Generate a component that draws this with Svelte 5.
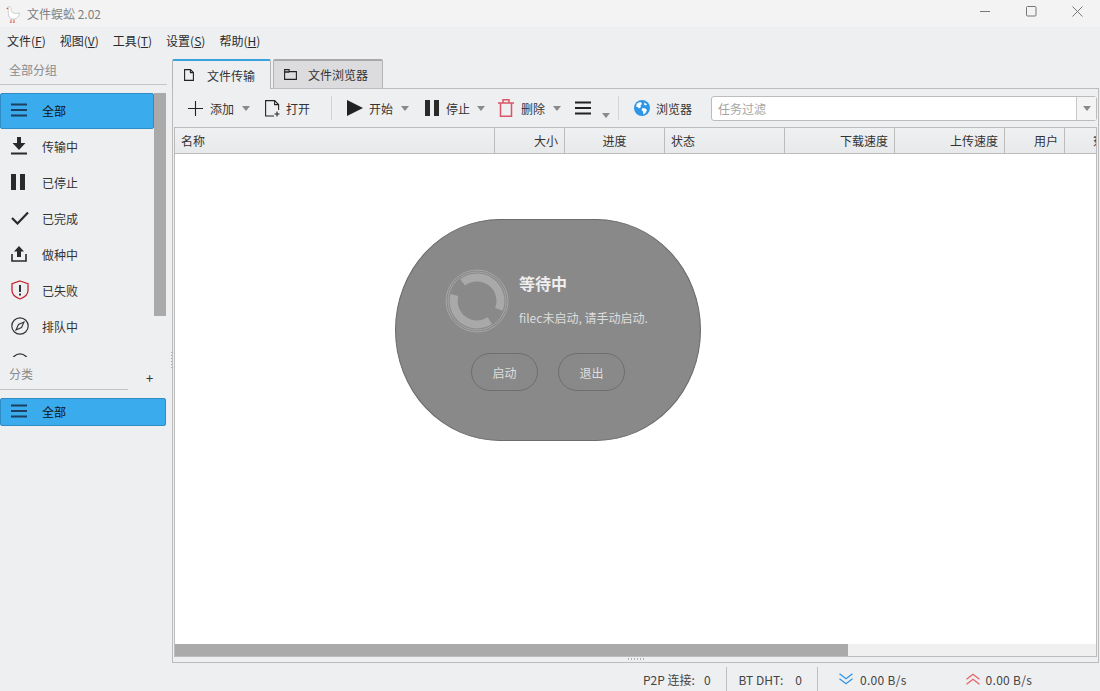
<script>
  const menus = [
    { name: "文件", key: "F" },
    { name: "视图", key: "V" },
    { name: "工具", key: "T" },
    { name: "设置", key: "S" },
    { name: "帮助", key: "H" }
  ];
  const groups = [
    { key: "all", label: "全部" },
    { key: "down", label: "传输中" },
    { key: "pause", label: "已停止" },
    { key: "check", label: "已完成" },
    { key: "seed", label: "做种中" },
    { key: "fail", label: "已失败" },
    { key: "queue", label: "排队中" },
    { key: "more", label: "" }
  ];
  const columns = [
    { label: "名称", width: 320, align: "left" },
    { label: "大小", width: 70, align: "right" },
    { label: "进度", width: 100, align: "center" },
    { label: "状态", width: 120, align: "left" },
    { label: "下载速度", width: 110, align: "right" },
    { label: "上传速度", width: 110, align: "right" },
    { label: "用户", width: 60, align: "right" }
  ];
</script>

{#snippet bars(color)}
  <svg width="16" height="14" viewBox="0 0 16 14" fill={color}>
    <rect x="0" y="0.5" width="16" height="2"/>
    <rect x="0" y="6" width="16" height="2"/>
    <rect x="0" y="11.5" width="16" height="2"/>
  </svg>
{/snippet}

{#snippet caret()}
  <svg class="caret" width="8" height="5" viewBox="0 0 8 5"><path d="M0 0h8L4 5z" fill="#8a8a8a"/></svg>
{/snippet}

{#snippet groupIcon(key)}
  {#if key === "all"}
    {@render bars("#1d3f60")}
  {:else if key === "down"}
    <svg width="16" height="18" viewBox="0 0 16 18" fill="#2a2a2a"><path d="M6 0h4v6h4.5L8 13 1.5 6H6z"/><rect y="15.5" width="16" height="2"/></svg>
  {:else if key === "pause"}
    <svg width="14" height="16" viewBox="0 0 14 16" fill="#2a2a2a"><rect width="5" height="16"/><rect x="9" width="5" height="16"/></svg>
  {:else if key === "check"}
    <svg width="18" height="14" viewBox="0 0 18 14" fill="none" stroke="#2a2a2a" stroke-width="2.2"><path d="M1 7l5.5 5.5L17 1.5"/></svg>
  {:else if key === "seed"}
    <svg width="16" height="16" viewBox="0 0 16 16"><path d="M8 0l5 5.500h-3V11H6V5.500H3z" fill="#2a2a2a"/><path d="M1 8v7h14V8" fill="none" stroke="#2a2a2a" stroke-width="1.600"/></svg>
  {:else if key === "fail"}
    <svg width="18" height="20" viewBox="0 0 18 20"><path d="M9 1l8 2.600v7c0 4-3.400 6.800-8 8.400-4.600-1.600-8-4.400-8-8.400v-7z" fill="none" stroke="#c4262e" stroke-width="1.300"/><rect x="8" y="5" width="2" height="7" fill="#333"/><rect x="8" y="13.500" width="2" height="2" fill="#333"/></svg>
  {:else if key === "queue"}
    <svg width="18" height="18" viewBox="0 0 18 18"><circle cx="9" cy="9" r="8.200" fill="none" stroke="#333" stroke-width="1.200"/><path d="M13 5l-2.500 5.500L5 13l2.500-5.500z" fill="none" stroke="#333" stroke-width="1.100"/></svg>
  {:else if key === "more"}
    <svg width="18" height="18" viewBox="0 0 18 18"><circle cx="9" cy="9" r="8.200" fill="none" stroke="#333" stroke-width="1.200"/></svg>
  {/if}
{/snippet}

<div class="window">
  <header class="titlebar">
    <svg class="logo" width="16" height="18" viewBox="0 0 16 18">
      <path d="M3 2c1.500-1 3-.5 3 1.500 0 2 .5 3.500 2 4.500 2 .5 4 .5 6.500 0-.5 3.500-2.500 5.500-5.500 6-3 .5-5-1-5.500-4-.3-2.500 0-4-.5-6z" fill="#fff" stroke="#bbb" stroke-width=".7"/>
      <path d="M3.200 2.200L1 3.800l2.400.4z" fill="#d9583f"/>
      <path d="M6 14.500v2.800M9 14.500v2.800M4.800 17.300h1.800M7.800 17.300h1.800" stroke="#d9583f" stroke-width=".9" fill="none"/>
    </svg>
    <span class="app-name">文件蜈蚣 2.02</span>
    <div class="win-btns">
      <svg width="11" height="11" viewBox="0 0 11 11"><path d="M0 5.500h10" stroke="#777"/></svg>
      <svg width="11" height="11" viewBox="0 0 11 11"><rect x=".5" y=".5" width="9.500" height="9.500" rx="1" fill="none" stroke="#777"/></svg>
      <svg width="11" height="11" viewBox="0 0 11 11"><path d="M.5.500l10 10M10.500.500l-10 10" stroke="#777"/></svg>
    </div>
  </header>

  <nav class="menubar">
    {#each menus as m}<span>{m.name}(<u>{m.key}</u>)</span>{/each}
  </nav>

  <div class="body">
    <aside class="sidebar">
      <div class="side-title">全部分组</div>
      <div class="group-wrap">
        <ul class="group-list">
          {#each groups as g, i}
            <li class:active={i === 0}>
              <span class="ico">{@render groupIcon(g.key)}</span>
              <span>{g.label}</span>
            </li>
          {/each}
        </ul>
        <div class="side-scroll"></div>
      </div>
      <div class="cat-head">
        <div class="cat-title">分类</div>
        <span class="plus">+</span>
      </div>
      <div class="cat-item">
        <span class="ico">{@render bars("#1d3f60")}</span>
        <span>全部</span>
      </div>
    </aside>

    <div class="splitter"><i></i></div>

    <main class="main">
      <div class="tabs">
        <div class="tab active">
          <svg width="10" height="12" viewBox="0 0 10 12" fill="none" stroke="#222" stroke-width="1.100"><path d="M.6.600h5.800l3 3v7.800H.6zM6.400.600v3h3"/></svg>
          <span>文件传输</span>
        </div>
        <div class="tab">
          <svg width="13" height="11" viewBox="0 0 13 11" fill="none" stroke="#222" stroke-width="1.100"><path d="M.6.600h4.500v2h7.300v7.800H.6z"/><path d="M.6 3h4.500" stroke-width="1.500"/></svg>
          <span>文件浏览器</span>
        </div>
      </div>

      <section class="pane">
        <div class="toolbar">
          <div class="tool t-add">
            <svg width="15" height="15" viewBox="0 0 15 15"><path d="M7.500 0v15M0 7.500h15" stroke="#222" stroke-width="1.100"/></svg>
            <span>添加</span>{@render caret()}
          </div>
          <div class="tool t-open">
            <svg width="15" height="17" viewBox="0 0 15 17" fill="none" stroke="#222" stroke-width="1.100"><path d="M9 16H.6V.6h9l4 4V10"/><path d="M9.600.6v4h4M12 11.500v5M9.500 14h5"/></svg>
            <span>打开</span>
          </div>
          <i class="sep s1"></i>
          <div class="tool t-start">
            <svg width="16" height="16" viewBox="0 0 16 16"><path d="M0 0l16 8-16 8z" fill="#222"/></svg>
            <span>开始</span>{@render caret()}
          </div>
          <div class="tool t-stop">
            <svg width="14" height="16" viewBox="0 0 14 16" fill="#2a2a2a"><rect width="5" height="16"/><rect x="9" width="5" height="16"/></svg>
            <span>停止</span>{@render caret()}
          </div>
          <div class="tool t-del">
            <svg width="16" height="18" viewBox="0 0 16 18" fill="none" stroke="#dc5566" stroke-width="1.500"><path d="M0 4h16M5 4V.8h6V4M2.500 4v13.200h11V4"/></svg>
            <span>删除</span>{@render caret()}
          </div>
          <div class="tool t-more">
            {@render bars("#222")}
            <svg class="low" width="8" height="5" viewBox="0 0 8 5"><path d="M0 0h8L4 5z" fill="#8a8a8a"/></svg>
          </div>
          <i class="sep s2"></i>
          <div class="tool t-browser">
            <svg width="16" height="16" viewBox="0 0 16 16">
              <circle cx="8" cy="8" r="8" fill="#2e96e6"/>
              <path d="M3 3.500c1.500-1 3-1.500 4-1.200L8 4 6.500 5.500 7 7 5 8.500 3.500 7 2 6.500zM8.500 8l3 .5 1.500 1.500-1.500 3-2 1.500-.5-3-1.500-1.500zM10.500 2.500l2.500 2-1.500 1-1.500-1z" fill="#fff"/>
            </svg>
            <span>浏览器</span>
          </div>
          <div class="filter">
            <span class="filter-text">任务过滤</span>
            <span class="filter-btn"><svg width="8" height="5" viewBox="0 0 8 5"><path d="M0 0h8L4 5z" fill="#8a8a8a"/></svg></span>
          </div>
        </div>

        <div class="table">
          <div class="thead">
            {#each columns as c}
              <div class="th" style="width:{c.width}px;text-align:{c.align}">{c.label}</div>
            {/each}
            <div class="th last">剩余时间</div>
          </div>
          <div class="tbody"></div>
          <div class="hscroll"><div class="thumb"></div></div>

          <div class="waiting">
            <div class="wait-top">
              <svg width="66" height="66" viewBox="0 0 66 66" fill="none">
                <circle cx="33" cy="33" r="31" stroke="#a6a6a6" stroke-width="1"/>
                <circle cx="33" cy="33" r="29" stroke="#a6a6a6" stroke-width="1"/>
                <path d="M18.600 14.400A23.500 23.500 0 0 1 54.900 41.400" stroke="#a9a9a9" stroke-width="8"/>
                <path d="M10.300 27.100A23.500 23.500 0 0 0 45.800 52.700" stroke="#a9a9a9" stroke-width="8"/>
              </svg>
              <div class="wait-text">
                <div class="wait-title">等待中</div>
                <div class="wait-sub">filec未启动, 请手动启动.</div>
              </div>
            </div>
            <div class="wait-btns">
              <button>启动</button>
              <button>退出</button>
            </div>
          </div>
        </div>
      </section>
      <div class="pane-handle"></div>

      <footer class="statusbar">
        <span class="st-p2p">P2P 连接:</span><span class="st-n1">0</span>
        <i class="st-sep"></i>
        <span class="st-bt">BT DHT:</span><span class="st-n2">0</span>
        <i class="st-sep"></i>
        <svg class="st-down" width="14" height="12" viewBox="0 0 14 12" fill="none" stroke="#2e96e6" stroke-width="1.300"><path d="M.5.700L7 5.700 13.500.700M.5 5.700L7 10.700l6.500-5"/></svg>
        <span class="st-rate">0.00 B/s</span>
        <svg class="st-up" width="14" height="12" viewBox="0 0 14 12" fill="none" stroke="#e4646a" stroke-width="1.300"><path d="M.5 6.300L7 1.300l6.500 5M.5 11.300L7 6.300l6.500 5"/></svg>
        <span class="st-rate">0.00 B/s</span>
      </footer>
    </main>
  </div>
</div>

<style>
  :global(body) {
    margin: 0;
    background: #eeeff1;
  }

  .window {
    width: 1100px;
    height: 691px;
    display: flex;
    flex-direction: column;
    overflow: hidden;
    font-family: "Noto Sans CJK SC", "Liberation Sans", sans-serif;
    font-size: 12px;
    color: #333;
  }

  .titlebar {
    height: 27px;
    flex: none;
    display: flex;
    align-items: center;
    background: #f3f3f3;
    padding-left: 5px;
  }

  .logo {
    margin-right: 6px;
  }

  .app-name {
    color: #808080;
    font-size: 12px;
  }

  .win-btns {
    margin-left: auto;
    display: flex;
    gap: 35px;
    padding-right: 17px;
    padding-bottom: 5px;
  }

  .menubar {
    height: 27px;
    flex: none;
    display: flex;
    align-items: center;
    gap: 14px;
    padding-left: 7px;
    color: #2b2b2b;
  }

  .body {
    flex: 1;
    display: flex;
    min-height: 0;
  }

  .sidebar {
    width: 167px;
    flex: none;
    display: flex;
    flex-direction: column;
  }

  .side-title {
    height: 31px;
    box-sizing: border-box;
    padding: 7px 0 0 9px;
    color: #8a8a8a;
    border-bottom: 1px solid #c4c4c4;
  }

  .group-wrap {
    margin-top: 8px;
    height: 264px;
    display: flex;
    overflow: hidden;
  }

  .group-list {
    list-style: none;
    margin: 0;
    padding: 0;
    width: 154px;
    flex: none;
  }

  .group-list li,
  .cat-item {
    height: 36px;
    box-sizing: border-box;
    display: flex;
    align-items: center;
    padding-bottom: 2px;
    color: #333;
  }

  .ico {
    width: 42px;
    padding-left: 11px;
    box-sizing: border-box;
    display: flex;
    align-items: center;
    flex: none;
  }

  .group-list li.active,
  .cat-item {
    background: #3aabec;
    border: 1px solid #2f8cc4;
    border-radius: 2px;
    color: #111;
  }

  .group-list li.active .ico,
  .cat-item .ico {
    width: 41px;
    padding-left: 10px;
  }

  .side-scroll {
    width: 12px;
    height: 223px;
    background: #aaaaaa;
    flex: none;
  }

  .cat-head {
    height: 41px;
    display: flex;
  }

  .cat-title {
    width: 128px;
    height: 33px;
    box-sizing: border-box;
    padding: 8px 0 0 9px;
    color: #8a8a8a;
    border-bottom: 1px solid #c4c4c4;
  }

  .plus {
    margin: 12px 0 0 18px;
    font-size: 13px;
    line-height: 18px;
    color: #333;
  }

  .cat-item {
    height: 28px;
    width: 166px;
  }

  .splitter {
    width: 5px;
    flex: none;
    display: flex;
    align-items: flex-start;
    justify-content: center;
  }

  .splitter i {
    display: block;
    width: 1px;
    height: 16px;
    margin-top: 298px;
    margin-left: 4px;
    background: repeating-linear-gradient(to bottom, #aaa 0 1px, transparent 1px 3px);
  }

  .main {
    flex: 1;
    min-width: 0;
    display: flex;
    flex-direction: column;
  }

  .tabs {
    height: 34px;
    flex: none;
    display: flex;
    align-items: flex-end;
    gap: 2px;
    box-sizing: border-box;
    padding-top: 5px;
  }

  .tab {
    height: 29px;
    box-sizing: border-box;
    display: flex;
    align-items: center;
    background: #dcdcde;
    border: 1px solid #b5b5b5;
    border-top: 2px solid #a8a8a8;
    border-bottom: none;
    border-radius: 2px 2px 0 0;
    padding-left: 10px;
    width: 110px;
    gap: 11px;
  }

  .tab.active {
    width: 99px;
    background: #eeeff1;
    border-top-color: #3aa3dc;
    padding-left: 11px;
    gap: 13px;
    height: 30px;
    margin-bottom: -1px;
    position: relative;
    z-index: 1;
  }

  .pane {
    height: 575px;
    flex: none;
    box-sizing: border-box;
    border: 1px solid #bcbcbc;
    padding-left: 1px;
    margin-right: 1px;
    display: flex;
    flex-direction: column;
  }

  .toolbar {
    height: 38px;
    flex: none;
    display: flex;
    align-items: center;
  }

  .tool {
    display: flex;
    align-items: center;
    gap: 6px;
    flex: none;
  }

  .caret {
    margin-left: 1px;
  }

  .t-add { margin-left: 14px; gap: 7px; }
  .t-open { margin-left: 15px; }
  .s1 { margin-left: 21px; }
  .t-start { margin-left: 15px; }
  .t-start .caret { margin-left: 2px; }
  .t-stop { margin-left: 16px; gap: 7px; }
  .t-stop .caret { margin-left: 0; }
  .t-del { margin-left: 13px; gap: 7px; }
  .t-more { margin-left: 14px; gap: 11px; }
  .s2 { margin-left: 8px; }
  .t-browser { margin-left: 15px; }

  .low {
    margin-top: 15px;
  }

  .sep {
    width: 1px;
    height: 24px;
    background: #d4d4d4;
    flex: none;
  }

  .filter {
    margin-left: 19px;
    width: 386px;
    height: 25px;
    box-sizing: border-box;
    background: #fff;
    border: 1px solid #bcbcbc;
    border-radius: 3px;
    display: flex;
    align-items: center;
    flex: none;
  }

  .filter-text {
    flex: 1;
    padding-left: 6px;
    color: #a5a5a5;
  }

  .filter-btn {
    width: 20px;
    height: 100%;
    box-sizing: border-box;
    border-left: 1px solid #c8c8c8;
    background: #f4f4f4;
    display: flex;
    align-items: center;
    justify-content: center;
  }

  .table {
    flex: 1;
    min-height: 0;
    display: flex;
    flex-direction: column;
    position: relative;
    margin: 0 1px 5px 0;
    border-bottom: 1px solid #bcbcbc;
    border-left: 1px solid #bcbcbc;
    border-right: 1px solid #bcbcbc;
  }

  .thead {
    height: 27px;
    flex: none;
    box-sizing: border-box;
    display: flex;
    overflow: hidden;
    border-top: 1px solid #bcbcbc;
    border-bottom: 1px solid #bcbcbc;
    background: linear-gradient(#eff0f2, #e8e9eb);
  }

  .th {
    flex: none;
    box-sizing: border-box;
    height: 25px;
    line-height: 25px;
    padding: 0 6px;
    border-right: 1px solid #bcbcbc;
    white-space: nowrap;
  }

  .th.last {
    border-right: none;
    padding: 0 0 0 28px;
    width: 90px;
  }

  .tbody {
    flex: 1;
    background: #fff;
  }

  .hscroll {
    height: 12px;
    flex: none;
    background: #f0f0f0;
  }

  .thumb {
    width: 673px;
    height: 100%;
    background: #aaaaaa;
  }

  .pane-handle {
    height: 2px;
    flex: none;
    width: 18px;
    margin: -5px 0 3px 456px;
    background: repeating-linear-gradient(to right, #b0b0b0 0 1px, transparent 1px 3px);
  }

  .waiting {
    position: absolute;
    left: 220px;
    top: 92px;
    width: 306px;
    height: 222px;
    box-sizing: border-box;
    background: #898989;
    border: 1px solid #6a6a6a;
    border-radius: 105px / 111px;
    display: flex;
    flex-direction: column;
    padding: 48px 0 0 48px;
  }

  .wait-top {
    display: flex;
    gap: 8px;
    height: 66px;
  }

  .wait-text {
    padding-left: 1px;
  }

  .wait-title {
    font-size: 16px;
    font-weight: 700;
    line-height: 24px;
    margin-top: 3px;
    color: #eeeeee;
  }

  .wait-sub {
    margin-top: 14px;
    line-height: 18px;
    color: #dddddd;
    white-space: nowrap;
  }

  .wait-btns {
    display: flex;
    gap: 20px;
    margin: 19px 0 0 27px;
  }

  .wait-btns button {
    width: 67px;
    height: 38px;
    padding: 0;
    font: inherit;
    color: #dfdfdf;
    background: transparent;
    border: 1px solid #6e6e6e;
    border-radius: 19px;
  }

  .statusbar {
    flex: 1;
    display: flex;
    align-items: center;
    color: #444;
    padding: 4px 0 0 471px;
  }

  .st-n1 {
    margin-left: 9px;
  }

  .st-n2 {
    margin-left: 12px;
  }

  .st-sep {
    width: 1px;
    height: 24px;
    background: #c0c0c0;
    margin-left: 15px;
    flex: none;
  }

  .st-bt { margin-left: 12px; }
  .st-down { margin-left: 21px; }
  .st-up { margin-left: 59px; }

  .st-rate {
    margin-left: 7px;
    letter-spacing: 0.3px;
  }

  .st-up + .st-rate {
    margin-left: 6px;
  }
</style>
